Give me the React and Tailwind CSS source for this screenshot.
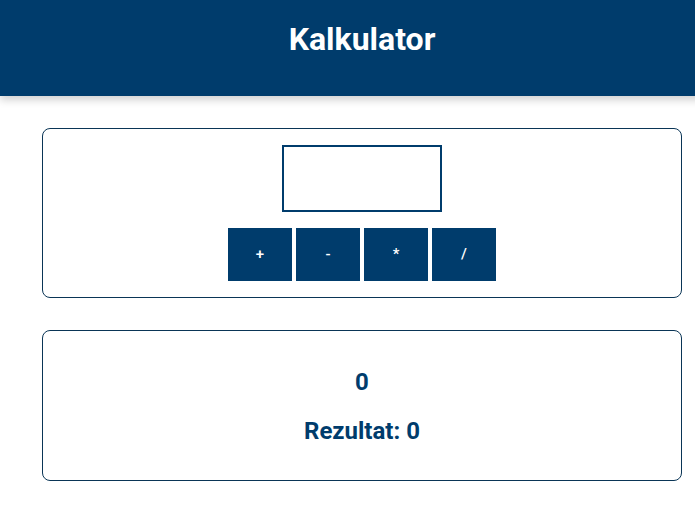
export default function App() {
  return (
    <div className="w-full min-h-screen overflow-hidden bg-white" style={{ fontFamily: 'Roboto, "Noto Sans", sans-serif' }}>
      <div className="w-[724px]">
        <header className="h-[96px] bg-[#003c6c] flex justify-center pt-[19px] shadow-[0_4px_8px_rgba(0,0,0,0.18)]">
          <h1 className="text-[32px] font-bold text-white leading-[40px]">Kalkulator</h1>
        </header>

        <div className="mx-[42px] mt-[32px] border border-[#0a3556] rounded-lg px-4 py-4 flex flex-col items-center gap-4">
          <input
            type="text"
            className="w-[160px] h-[67px] border-2 border-[#003c6c] outline-none px-2 text-[#003c6c]"
          />
          <div className="flex gap-1">
            {['+', '-', '*', '/'].map((op) => (
              <button key={op} className="w-[64px] h-[53px] bg-[#003c6c] text-white text-[15px] font-medium">
                {op}
              </button>
            ))}
          </div>
        </div>

        <div className="mx-[42px] mt-[32px] h-[151px] border border-[#0a3556] rounded-lg flex flex-col items-center pt-[39px] gap-[25px] text-[#003c6c]">
          <p className="text-[24px] font-bold leading-[24px]">0</p>
          <p className="text-[24px] font-bold leading-[24px]">Rezultat: 0</p>
        </div>
      </div>
    </div>
  )
}
